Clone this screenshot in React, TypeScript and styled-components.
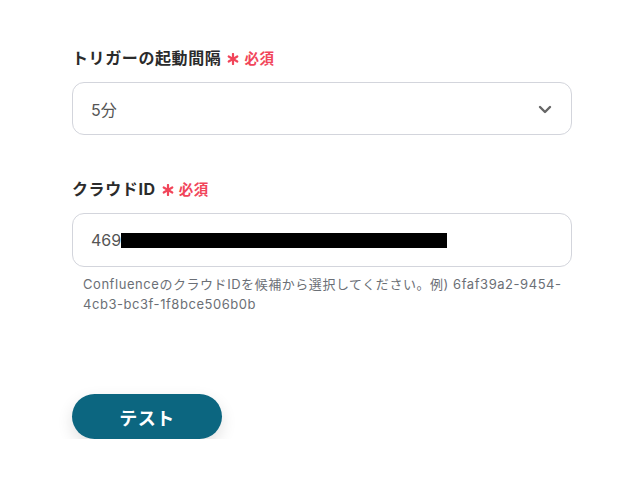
import React from "react";
import styled, { createGlobalStyle } from "styled-components";

const Global = createGlobalStyle`
  html, body { margin: 0; padding: 0; background: #fff; }
  body { font-family: "Inter", "Noto Sans CJK JP", sans-serif; }
`;

const Page = styled.div`
  width: 500px;
  padding: 45px 0 0 72px;
  display: flex;
  flex-direction: column;
`;

const Field = styled.div<{ $mb: number }>`
  display: flex;
  flex-direction: column;
  margin-bottom: ${(p) => p.$mb}px;
`;

const Label = styled.div`
  display: flex;
  align-items: center;
  gap: 6px;
  font-size: 16px;
  font-weight: 700;
  color: #2b2b2b;
  letter-spacing: 0.6px;
  height: 24px;
  margin-bottom: 13px;
`;

const Required = styled.span`
  color: #f1455a;
  font-size: 14.5px;
  font-weight: 700;
  letter-spacing: 0.5px;
  display: flex;
  align-items: center;
  gap: 5px;
`;

const Box = styled.div<{ $h: number }>`
  box-sizing: border-box;
  height: ${(p) => p.$h}px;
  border: 1px solid #d3d5dc;
  border-radius: 12px;
  display: flex;
  align-items: center;
  justify-content: space-between;
  padding: 0 18px 0 18px;
  font-size: 16px;
  color: #555;
`;

const Value = styled.span`
  display: flex;
  align-items: center;
`;

const Redact = styled.span`
  display: inline-block;
  width: 326px;
  height: 15px;
  background: #000;
`;

const Help = styled.div`
  padding: 7px 0 0 11px;
  font-size: 13px;
  line-height: 20px;
  color: #6b6f76;
  letter-spacing: 0.55px;
`;

const Button = styled.button`
  width: 150px;
  height: 45px;
  border: none;
  border-radius: 23px;
  background: #0c6680;
  color: #fff;
  font-family: "Inter", "Noto Sans CJK JP", sans-serif;
  font-size: 18px;
  font-weight: 700;
  letter-spacing: 0.5px;
  box-shadow: 0 6px 16px rgba(0, 0, 0, 0.12);
`;

const Star = () => (
  <svg width="12" height="12" viewBox="0 0 12 12" style={{ marginTop: 3 }}>
    <g stroke="#f1455a" strokeWidth="2.2" strokeLinecap="round">
      <line x1="6" y1="1" x2="6" y2="11" />
      <line x1="1.7" y1="3.5" x2="10.3" y2="8.5" />
      <line x1="1.7" y1="8.5" x2="10.3" y2="3.5" />
    </g>
  </svg>
);

export default function App() {
  return (
    <>
      <Global />
      <Page>
        <Field $mb={41}>
          <Label>
            トリガーの起動間隔
            <Required>
              <Star />必須
            </Required>
          </Label>
          <Box $h={53}>
            <Value>5分</Value>
            <svg width="16" height="16" viewBox="0 0 16 16">
              <path d="M3 6 L8 11 L13 6" fill="none" stroke="#666" strokeWidth="2.4" strokeLinecap="round" strokeLinejoin="round" />
            </svg>
          </Box>
        </Field>
        <Field $mb={80}>
          <Label>
            クラウドID
            <Required>
              <Star />必須
            </Required>
          </Label>
          <Box $h={54}>
            <Value>
              469<Redact />
            </Value>
          </Box>
          <Help>
            ConfluenceのクラウドIDを候補から選択してください。例) 6faf39a2-9454-
            <br />
            4cb3-bc3f-1f8bce506b0b
          </Help>
        </Field>
        <div>
          <Button>テスト</Button>
        </div>
      </Page>
    </>
  );
}
